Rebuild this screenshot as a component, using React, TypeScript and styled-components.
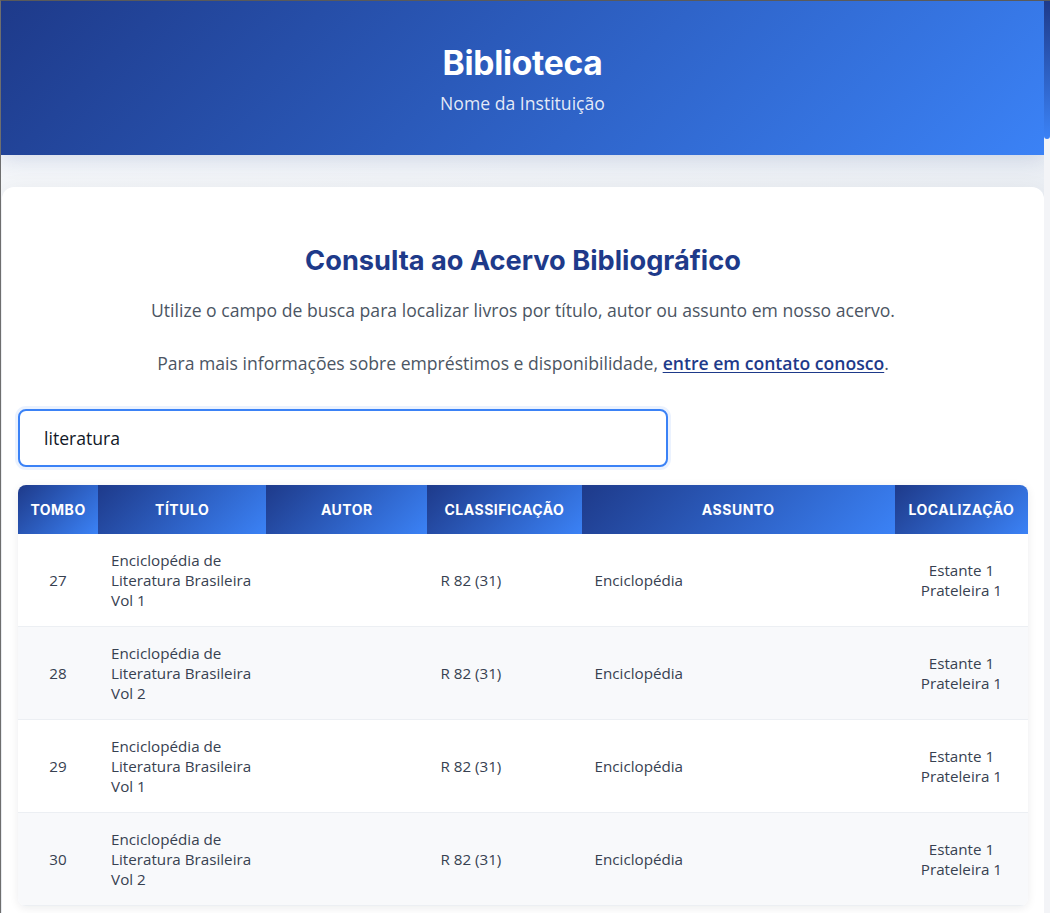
import React from "react";
import styled, { createGlobalStyle } from "styled-components";

const GlobalStyle = createGlobalStyle`
  * { box-sizing: border-box; }
  html {
    border-left: 1px solid #6e6e6e;
    border-top: 1px solid #5a5a5a;
    background: #eef1f6;
    overflow: hidden;
  }
  body {
    margin: 0;
    font-family: "Open Sans", "Liberation Sans", sans-serif;
    color: #374151;
    overflow: hidden;
  }
`;

const Frame = styled.div`
  display: flex;
  height: calc(100vh - 1px);
`;

const Page = styled.div`
  flex: 1;
  min-width: 0;
  overflow: hidden;
  background: linear-gradient(135deg, #f5f7fa 0%, #e4e9f0 100%);
`;

const ScrollTrack = styled.div`
  width: 6px;
  flex: none;
  background: #f3f4f7;
`;

const ScrollThumb = styled.div`
  height: 138px;
  background: linear-gradient(180deg, #1e3a8a, #3b82f6);
  border-radius: 0 0 3px 3px;
`;

const Header = styled.header`
  background: linear-gradient(135deg, #1e3a8a 0%, #3b82f6 100%);
  color: #fff;
  text-align: center;
  padding: 42px 16px 39px;
  box-shadow: 0 4px 20px rgba(30, 58, 138, 0.15);
`;

const Title = styled.h1`
  margin: 0;
  font-family: Inter, "Liberation Sans", sans-serif;
  font-weight: 700;
  font-size: 33.6px;
  line-height: 40px;
  letter-spacing: -0.3px;
`;

const Subtitle = styled.p`
  margin: 7px 0 0;
  font-size: 17.6px;
  line-height: 26px;
  color: rgba(255, 255, 255, 0.88);
`;

const Main = styled.main`
  padding: 32px 0 40px 1px;
`;

const Card = styled.section`
  background: #fff;
  border-radius: 12px;
  box-shadow: 0 4px 24px rgba(15, 23, 42, 0.06);
  padding: 57px 16px 32px;
`;

const Intro = styled.div`
  text-align: center;
  margin-bottom: 32px;
`;

const Heading = styled.h2`
  margin: 0 0 18px;
  font-family: Inter, "Liberation Sans", sans-serif;
  font-weight: 700;
  font-size: 27.2px;
  line-height: 34px;
  color: #1e3a8a;
`;

const Lead = styled.p`
  margin: 0 0 25px;
  font-size: 17.6px;
  line-height: 28px;
  color: #4b5563;
  &:last-child { margin-bottom: 0; }
`;

const Link = styled.a`
  color: #1e3a8a;
  font-weight: 600;
  text-decoration: underline;
  text-underline-offset: 2px;
`;

const SearchInput = styled.input`
  display: block;
  width: 650px;
  height: 58px;
  padding: 0 24px;
  font-family: "Open Sans", "Liberation Sans", sans-serif;
  font-size: 17.6px;
  color: #111827;
  border: 2px solid #3b82f6;
  border-radius: 8px;
  outline: none;
  box-shadow: 0 0 0 3px rgba(59, 130, 246, 0.1);
  caret-color: #111;
`;

const TableWrap = styled.div`
  margin-top: 18px;
  border-radius: 8px;
  overflow: hidden;
  box-shadow: 0 2px 10px rgba(15, 23, 42, 0.08);
`;

const Table = styled.table`
  width: 100%;
  border-collapse: collapse;
  table-layout: fixed;
`;

const Th = styled.th`
  background: linear-gradient(135deg, #1e3a8a 0%, #3b82f6 100%);
  color: #fff;
  font-family: Inter, "Liberation Sans", sans-serif;
  font-weight: 700;
  font-size: 14px;
  line-height: 17px;
  letter-spacing: 0.5px;
  text-transform: uppercase;
  padding: 16px 4px;
  text-align: center;
  white-space: nowrap;
`;

const Row = styled.tr<{ $alt: boolean }>`
  background: ${(p) => (p.$alt ? "#f8f9fb" : "#fff")};
  border-bottom: 1px solid #eceff3;
`;

const Td = styled.td<{ $align?: "left" | "center" }>`
  padding: 16px 13px;
  font-size: 15.2px;
  line-height: 20px;
  color: #374151;
  text-align: ${(p) => p.$align || "left"};
  vertical-align: middle;
`;

const cols = [80, 168, 161, 154, 313, 133];
const headers = ["Tombo", "Título", "Autor", "Classificação", "Assunto", "Localização"];

const rows = Array.from({ length: 4 }, (_, i) => ({
  tombo: 27 + i,
  titulo: `Enciclopédia de Literatura Brasileira Vol ${(i % 2) + 1}`,
  autor: "",
  classificacao: "R 82 (31)",
  assunto: "Enciclopédia",
}));

export default function App() {
  return (
    <>
      <GlobalStyle />
      <Frame>
        <Page>
          <Header>
            <Title>Biblioteca</Title>
            <Subtitle>Nome da Instituição</Subtitle>
          </Header>
          <Main>
            <Card>
              <Intro>
                <Heading>Consulta ao Acervo Bibliográfico</Heading>
                <Lead>Utilize o campo de busca para localizar livros por título, autor ou assunto em nosso acervo.</Lead>
                <Lead>
                  Para mais informações sobre empréstimos e disponibilidade,{" "}
                  <Link href="#">entre em contato conosco</Link>.
                </Lead>
              </Intro>
              <SearchInput defaultValue="literatura" autoFocus />
              <TableWrap>
                <Table>
                  <colgroup>
                    {cols.map((w, i) => (
                      <col key={i} style={{ width: w }} />
                    ))}
                  </colgroup>
                  <thead>
                    <tr>
                      {headers.map((h) => (
                        <Th key={h}>{h}</Th>
                      ))}
                    </tr>
                  </thead>
                  <tbody>
                    {rows.map((r, i) => (
                      <Row key={r.tombo} $alt={i % 2 === 1}>
                        <Td $align="center">{r.tombo}</Td>
                        <Td>{r.titulo}</Td>
                        <Td>{r.autor}</Td>
                        <Td>{r.classificacao}</Td>
                        <Td>{r.assunto}</Td>
                        <Td $align="center">
                          Estante 1<br />
                          Prateleira 1
                        </Td>
                      </Row>
                    ))}
                  </tbody>
                </Table>
              </TableWrap>
            </Card>
          </Main>
        </Page>
        <ScrollTrack>
          <ScrollThumb />
        </ScrollTrack>
      </Frame>
    </>
  );
}
